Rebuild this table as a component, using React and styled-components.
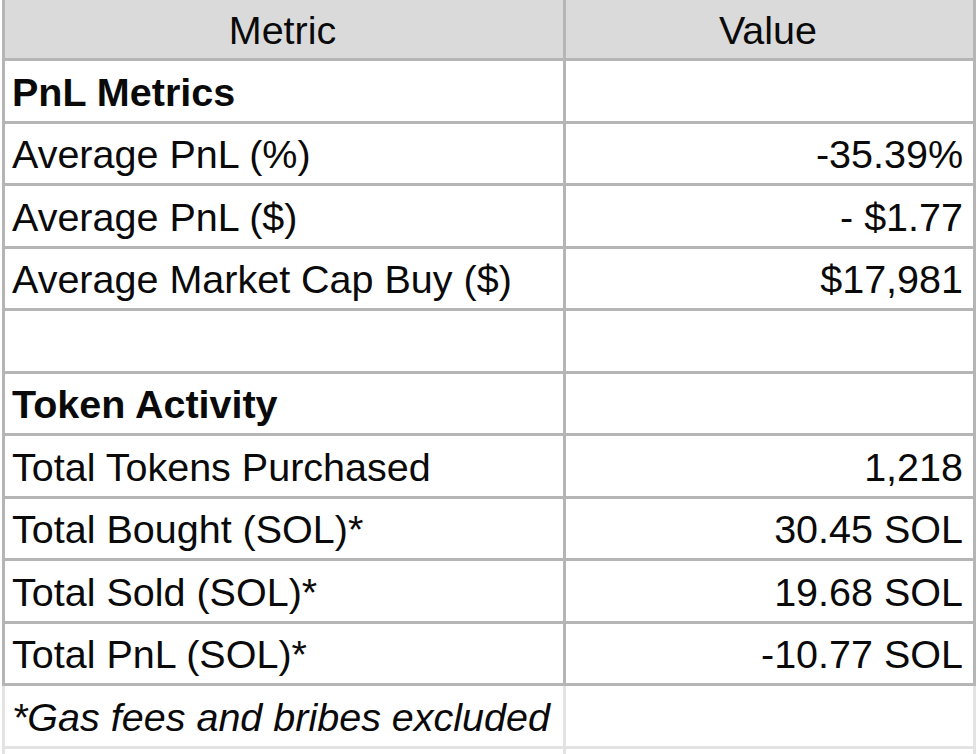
import React from 'react';
import styled, { createGlobalStyle } from 'styled-components';

const GlobalStyle = createGlobalStyle`
	html, body {
		margin: 0;
		padding: 0;
		background: #ffffff;
	}
	body {
		font-family: 'Liberation Sans', Arial, sans-serif;
		color: #0a0a0a;
	}
`;

const Sheet = styled.div`
	width: 974px;
	height: 754px;
	margin-left: 2px;
	display: flex;
	flex-direction: column;
	overflow: hidden;
	font-size: 39.5px;
`;

const Row = styled.div`
	display: grid;
	grid-template-columns: 561px 1fr;
	flex: none;
	height: ${({ $header }) => ($header ? '61px' : '62.5px')};
	box-sizing: border-box;
	background: ${({ $header }) => ($header ? '#dadada' : '#ffffff')};
	border-left: 3px solid ${({ $light }) => ($light ? '#e3e3e3' : '#b5b5b5')};
	border-right: 3px solid ${({ $light }) => ($light ? '#e3e3e3' : '#b5b5b5')};
	border-bottom: 3px solid ${({ $light }) => ($light ? '#e3e3e3' : '#b5b5b5')};
`;

const Cell = styled.div`
	display: flex;
	align-items: center;
	justify-content: ${({ $align }) =>
		$align === 'center' ? 'center' : $align === 'right' ? 'flex-end' : 'flex-start'};
	padding: 3px 10px 0 7px;
	white-space: nowrap;
	font-weight: ${({ $bold }) => ($bold ? 700 : 400)};
	font-style: ${({ $italic }) => ($italic ? 'italic' : 'normal')};
	border-right: ${({ $divider, $light }) =>
		$divider ? `3px solid ${$light ? '#e3e3e3' : '#b5b5b5'}` : 'none'};
	line-height: 1;
`;

const rows = [
	{ label: 'PnL Metrics', value: '', bold: true },
	{ label: 'Average PnL (%)', value: '-35.39%' },
	{ label: 'Average PnL ($)', value: '- $1.77' },
	{ label: 'Average Market Cap Buy ($)', value: '$17,981' },
	{ label: '', value: '' },
	{ label: 'Token Activity', value: '', bold: true },
	{ label: 'Total Tokens Purchased', value: '1,218' },
	{ label: 'Total Bought (SOL)*', value: '30.45 SOL' },
	{ label: 'Total Sold (SOL)*', value: '19.68 SOL' },
	{ label: 'Total PnL (SOL)*', value: '-10.77 SOL' }
];

const App = () => {
	return (
		<>
			<GlobalStyle />
			<Sheet>
				<Row $header>
					<Cell $divider $align='center'>Metric</Cell>
					<Cell $align='center'>Value</Cell>
				</Row>
				{rows.map((row, i) => (
					<Row key={i}>
						<Cell $divider $bold={row.bold}>
							{row.label}
						</Cell>
						<Cell $align='right'>{row.value}</Cell>
					</Row>
				))}
				<Row $light>
					<Cell $divider $light $italic>
						*Gas fees and bribes excluded
					</Cell>
					<Cell />
				</Row>
				<Row $light>
					<Cell $divider $light />
					<Cell />
				</Row>
			</Sheet>
		</>
	);
};

export default App;
